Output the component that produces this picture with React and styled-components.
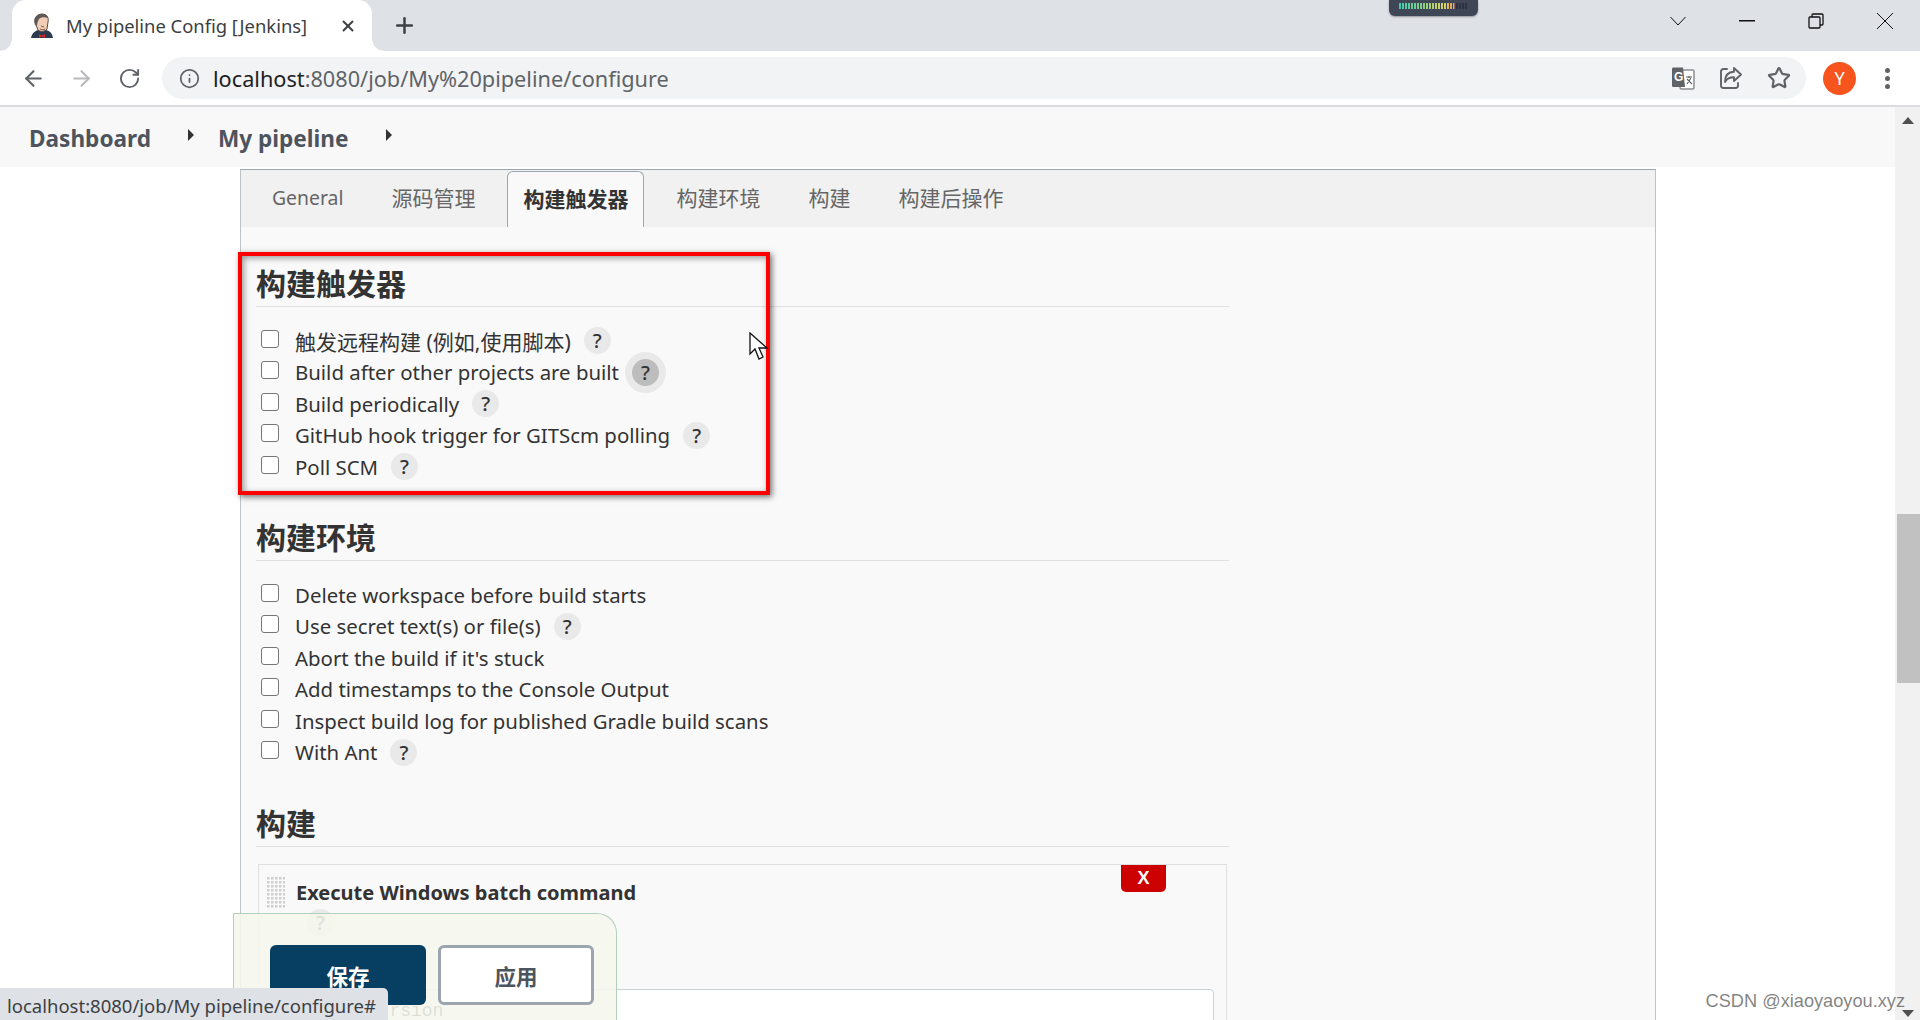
import React from 'react';
import styled, { createGlobalStyle } from 'styled-components';
import { ArrowLeft, ArrowRight, RotateCw, Info, Plus, X, Star } from 'lucide-react';

const Global = createGlobalStyle`
  html, body {
    margin: 0;
    padding: 0;
    background: #fff;
    overflow: hidden;
  }
  * {
    box-sizing: border-box;
  }
`;

const triggers = [
  { label: '触发远程构建 (例如,使用脚本)', help: true, cjk: true },
  { label: 'Build after other projects are built', help: true, hover: true },
  { label: 'Build periodically', help: true },
  { label: 'GitHub hook trigger for GITScm polling', help: true },
  { label: 'Poll SCM', help: true },
];

const environment = [
  { label: 'Delete workspace before build starts' },
  { label: 'Use secret text(s) or file(s)', help: true },
  { label: "Abort the build if it's stuck" },
  { label: 'Add timestamps to the Console Output' },
  { label: 'Inspect build log for published Gradle build scans' },
  { label: 'With Ant', help: true },
];

const tabs = ['General', '源码管理', '构建触发器', '构建环境', '构建', '构建后操作'];

function JenkinsIcon() {
  return (
    <svg width="24" height="26" viewBox="0 0 24 26">
      <path d="M1 25c1-5 4-7 7-8l8 0c4 1 6 3 7 8z" fill="#2c3a50" />
      <path d="M5 9c-1-5 3-8 7-8 5 0 7 4 6 8l-1 7c-2 3-7 3-9 1z" fill="#f0cdb4" stroke="#5c4a42" strokeWidth="1" />
      <path d="M5 12C3 6 6 1 12 1c3 0 6 1 6 4-3-1-7-1-9 1-1 2-2 4-2 7z" fill="#5e5a58" />
      <path d="M9 21l3 1.5 3-1.5 0 4-3-1.5-3 1.5z" fill="#d3262b" />
      <path d="M11 13l3 1M10 16c2 1 4 1 5 0" stroke="#7d5a48" strokeWidth="1" fill="none" />
    </svg>
  );
}

function TranslateIcon() {
  return (
    <svg width="24" height="24" viewBox="0 0 24 24">
      <rect x="9" y="4" width="14" height="19" rx="1.5" fill="#fff" stroke="#8a8d91" strokeWidth="1.5" />
      <path d="M1 3c0-1 .6-1.6 1.6-1.6H12l2 19.6H2.6C1.6 21 1 20.400 1 19.400z" fill="#5f6368" />
      <text x="3" y="15" fontSize="12" fontWeight="700" fill="#fff" fontFamily="Liberation Sans, sans-serif">G</text>
      <path d="M15 11h6M18 10v2M16 18l4-6M16 13l5 5" stroke="#5f6368" strokeWidth="1.2" fill="none" />
    </svg>
  );
}

function ShareIcon() {
  return (
    <svg width="24" height="24" viewBox="0 0 24 24" fill="none" stroke="#5f6368" strokeWidth="1.9" strokeLinejoin="round" strokeLinecap="round">
      <path d="M8 3H4.500A2.500 2.500 0 0 0 2 5.500v14A2.500 2.500 0 0 0 4.500 22h12a2.500 2.500 0 0 0 2.500-2.500V17" />
      <path d="M15 2l7 6.500L15 15v-3.700c-4 0-7 1-9 4.700 0-6 3-10 9-10.200z" />
    </svg>
  );
}

function CursorIcon() {
  return (
    <svg width="20" height="29" viewBox="0 0 20 29">
      <path d="M1 1v21l5-5 4 10 4-2-4-9h8z" fill="#fff" stroke="#111" strokeWidth="1.300" strokeLinejoin="miter" />
    </svg>
  );
}

function GripIcon() {
  const dots = [];
  for (let r = 0; r < 8; r++) {
    for (let c = 0; c < 5; c++) {
      dots.push(<rect key={`${r}-${c}`} x={c * 4} y={r * 4} width="2.500" height="2.500" fill="#cfcfcf" />);
    }
  }
  return (
    <svg width="18" height="32" viewBox="0 0 18 32">
      {dots}
    </svg>
  );
}

function OptionRow({ label, help, hover, cjk }) {
  return (
    <Row>
      <CheckBox />
      <Label $cjk={cjk}>{label}</Label>
      {help && <Help $hover={hover}>?</Help>}
    </Row>
  );
}

export default function App() {
  return (
    <Page>
      <Global />
      <TabStrip>
        <BrowserTab>
          <JenkinsIcon />
          <TabTitle>My pipeline Config [Jenkins]</TabTitle>
          <TabClose>
            <X size={18} strokeWidth={2.6} />
          </TabClose>
        </BrowserTab>
        <NewTab>
          <Plus size={25} strokeWidth={2.4} />
        </NewTab>
        <Meter>
          <MeterBars />
        </Meter>
        <WindowControls>
          <WinButton>
            <svg width="18" height="10" viewBox="0 0 18 10" fill="none" stroke="#111" strokeWidth="1">
              <path d="M1.500 1l7.500 8 7.500-8" />
            </svg>
          </WinButton>
          <WinButton>
            <svg width="16" height="2" viewBox="0 0 16 2">
              <rect width="16" height="1.500" fill="#111" />
            </svg>
          </WinButton>
          <WinButton>
            <svg width="16" height="16" viewBox="0 0 16 16" fill="none" stroke="#111" strokeWidth="1.300">
              <rect x="1" y="4" width="11" height="11" rx="1" />
              <path d="M4 4V2a1 1 0 0 1 1-1h9a1 1 0 0 1 1 1v9a1 1 0 0 1-1 1h-2" />
            </svg>
          </WinButton>
          <WinButton>
            <svg width="18" height="18" viewBox="0 0 18 18" stroke="#111" strokeWidth="1">
              <path d="M1 1l16 16M17 1L1 17" />
            </svg>
          </WinButton>
        </WindowControls>
      </TabStrip>

      <Toolbar>
        <NavIcon>
          <ArrowLeft size={25} strokeWidth={2} />
        </NavIcon>
        <NavIcon $off>
          <ArrowRight size={25} strokeWidth={2} />
        </NavIcon>
        <NavIcon>
          <RotateCw size={23} strokeWidth={2} />
        </NavIcon>
        <Omnibox>
          <Info size={21} strokeWidth={2} color="#5f6368" />
          <Url>
            localhost<span>:8080/job/My%20pipeline/configure</span>
          </Url>
          <OmniIcons>
            <TranslateIcon />
            <ShareIcon />
            <Star size={24} strokeWidth={2.2} color="#5f6368" />
          </OmniIcons>
        </Omnibox>
        <Avatar>Y</Avatar>
        <MenuDots>
          <i />
          <i />
          <i />
        </MenuDots>
      </Toolbar>

      <Viewport>
        <Main>
          <Breadcrumbs>
            <Crumb>Dashboard</Crumb>
            <Caret />
            <Crumb>My pipeline</Crumb>
            <Caret />
          </Breadcrumbs>
          <Content>
            <ConfigPanel>
              <ConfigTabs>
                {tabs.map((t, i) => (
                  <ConfigTab key={t} $active={i === 2} $latin={i === 0}>
                    {t}
                  </ConfigTab>
                ))}
              </ConfigTabs>
              <ConfigBody>
                <Section>
                  <Heading>构建触发器</Heading>
                  <Options>
                    {triggers.map((o) => (
                      <OptionRow key={o.label} {...o} />
                    ))}
                  </Options>
                  <RedBox />
                  <Cursor>
                    <CursorIcon />
                  </Cursor>
                </Section>
                <Section>
                  <Heading>构建环境</Heading>
                  <Options>
                    {environment.map((o) => (
                      <OptionRow key={o.label} {...o} />
                    ))}
                  </Options>
                </Section>
                <Section>
                  <Heading>构建</Heading>
                  <BuildStep>
                    <RemoveButton>X</RemoveButton>
                    <StepHead>
                      <GripIcon />
                      <StepTitle>Execute Windows batch command</StepTitle>
                    </StepHead>
                    <StepHelp>?</StepHelp>
                    <CommandBox>mvn --version</CommandBox>
                  </BuildStep>
                </Section>
              </ConfigBody>
            </ConfigPanel>
            <SaveBar>
              <SaveButton>保存</SaveButton>
              <ApplyButton>应用</ApplyButton>
            </SaveBar>
          </Content>
        </Main>
        <Scrollbar>
          <ScrollUp />
          <ScrollThumb />
          <ScrollDown />
        </Scrollbar>
      </Viewport>

      <StatusBubble>localhost:8080/job/My pipeline/configure#</StatusBubble>
      <Watermark>CSDN @xiaoyaoyou.xyz</Watermark>
    </Page>
  );
}

const UI_FONT = `"Noto Sans", "Noto Sans CJK SC", sans-serif`;

const Page = styled.div`
  position: relative;
  width: 1920px;
  height: 1020px;
  overflow: hidden;
  display: flex;
  flex-direction: column;
  font-family: ${UI_FONT};
  color: #333;
`;

const TabStrip = styled.div`
  height: 51px;
  flex: none;
  background: #dee1e6;
  display: flex;
  align-items: flex-end;
  padding-left: 12px;
  position: relative;
`;

const BrowserTab = styled.div`
  position: relative;
  width: 360px;
  height: 51px;
  background: #fff;
  border-radius: 14px 14px 0 0;
  display: flex;
  align-items: center;
  padding: 0 15px 0 18px;
  gap: 12px;

  &::before,
  &::after {
    content: '';
    position: absolute;
    bottom: 0;
    width: 12px;
    height: 12px;
    background: radial-gradient(circle at 0 0, #dee1e6 11.500px, #fff 12px);
  }
  &::before {
    left: -12px;
  }
  &::after {
    right: -12px;
    background: radial-gradient(circle at 100% 0, #dee1e6 11.500px, #fff 12px);
  }
`;

const TabTitle = styled.span`
  flex: 1;
  font-size: 18.400px;
  color: #3c4043;
  white-space: nowrap;
`;

const TabClose = styled.span`
  display: flex;
  color: #3c4043;
`;

const NewTab = styled.div`
  width: 34px;
  height: 51px;
  margin-left: 15px;
  display: flex;
  align-items: center;
  justify-content: center;
  color: #3c4043;
`;

const Meter = styled.div`
  position: absolute;
  top: 0;
  left: 1389px;
  width: 89px;
  height: 16px;
  background: #3f4655;
  border-radius: 0 0 6px 6px;
  box-shadow: 0 1px 2px rgba(0, 0, 0, 0.35);
  padding: 3px 10px;
`;

const MeterBars = styled.div`
  height: 6px;
  background:
    repeating-linear-gradient(90deg, transparent 0 2px, #3f4655 2px 3px),
    linear-gradient(90deg, #3cc9ae 0, #7ed08a 30%, #d8d060 65%, #e89a5e 80%, #2c3240 81%, #2c3240 100%);
`;

const WindowControls = styled.div`
  position: absolute;
  top: 0;
  right: 1px;
  height: 42px;
  display: flex;
`;

const WinButton = styled.div`
  width: 69px;
  display: flex;
  align-items: center;
  justify-content: center;
`;

const Toolbar = styled.div`
  height: 56px;
  flex: none;
  background: #fff;
  border-bottom: 2px solid #dadce0;
  display: flex;
  align-items: center;
  padding: 6px 0 6px 9px;
`;

const NavIcon = styled.div`
  width: 48px;
  display: flex;
  justify-content: center;
  color: ${(p) => (p.$off ? '#b8babd' : '#5f6368')};
`;

const Omnibox = styled.div`
  width: 1644px;
  height: 42px;
  margin-left: 9px;
  border-radius: 21px;
  background: #f1f3f4;
  display: flex;
  align-items: center;
  padding-left: 17px;
`;

const Url = styled.div`
  flex: 1;
  margin-left: 13px;
  font-size: 21.700px;
  color: #202124;
  white-space: nowrap;

  span {
    color: #5f6368;
  }
`;

const OmniIcons = styled.div`
  display: flex;
  align-items: center;
  gap: 24px;
  padding-right: 15px;
`;

const Avatar = styled.div`
  width: 33px;
  height: 33px;
  margin-left: 17px;
  border-radius: 50%;
  background: #f8541d;
  color: #fff;
  font-size: 18px;
  display: flex;
  align-items: center;
  justify-content: center;
`;

const MenuDots = styled.div`
  margin-left: 29px;
  display: flex;
  flex-direction: column;
  gap: 3px;

  i {
    width: 5px;
    height: 5px;
    border-radius: 50%;
    background: #5f6368;
  }
`;

const Viewport = styled.div`
  flex: 1;
  min-height: 0;
  display: flex;
`;

const Main = styled.div`
  flex: 1;
  min-width: 0;
  display: flex;
  flex-direction: column;
`;

const Breadcrumbs = styled.div`
  height: 60px;
  flex: none;
  background: #f8f8f8;
  display: flex;
  align-items: center;
  padding: 2px 0 0 29px;
`;

const Crumb = styled.a`
  font-size: 22.600px;
  font-weight: 700;
  color: #4d545d;
`;

const Caret = styled.span`
  width: 0;
  height: 0;
  margin: -6px 24px 0 37px;
  border-style: solid;
  border-width: 6px 0 6px 6px;
  border-color: transparent transparent transparent #333;
`;

const Content = styled.div`
  position: relative;
  flex: 1;
  min-height: 0;
  padding: 2px 0 0 240px;
  overflow: hidden;
`;

const ConfigPanel = styled.div`
  width: 1416px;
  height: 900px;
  background: #f9f9f9;
  border-left: 1px solid #bcc4c9;
  border-right: 1px solid #bcc4c9;
  border-top: 1px solid #9ba7af;
`;

const ConfigTabs = styled.div`
  height: 57px;
  background: #f1f1f1;
  display: flex;
  align-items: flex-end;
  gap: 16px;
  padding-left: 15px;
`;

const ConfigTab = styled.div`
  height: 56px;
  padding: 0 16px 4px;
  display: flex;
  align-items: center;
  font-size: ${(p) => (p.$latin ? '19.400px' : '21px')};
  color: ${(p) => (p.$active ? '#333' : '#666')};
  font-weight: ${(p) => (p.$active ? 700 : 400)};
  ${(p) =>
    p.$active &&
    `
    background: #f9f9f9;
    border: 1px solid #9ba7af;
    border-bottom: none;
    border-radius: 6px 6px 0 0;
    padding: 0 15px 4px;
  `}
`;

const ConfigBody = styled.div`
  padding: 19px 0 0 15px;
  display: flex;
  flex-direction: column;
  gap: 17.500px;
`;

const Section = styled.section`
  position: relative;
  width: 973px;
`;

const Heading = styled.h2`
  margin: 0;
  height: 61px;
  border-bottom: 1px solid #e0e0e0;
  font-size: 30px;
  font-weight: 700;
  line-height: 40px;
  padding-top: 18px;
  color: #333;
`;

const Options = styled.div`
  margin-top: 18px;
`;

const Row = styled.div`
  height: 31.500px;
  display: flex;
  align-items: center;
  padding-left: 5px;
`;

const CheckBox = styled.span`
  width: 18px;
  height: 18px;
  flex: none;
  margin-top: -4px;
  background: #fff;
  border: 1.500px solid #767676;
  border-radius: 3px;
`;

const Label = styled.span`
  margin-left: 16px;
  font-size: ${(p) => (p.$cjk ? '21px' : '20.400px')};
  color: #333;
  white-space: nowrap;
`;

const Help = styled.span`
  width: 27px;
  height: 27px;
  margin-left: 13px;
  flex: none;
  border-radius: 50%;
  background: ${(p) => (p.$hover ? '#bdbdbd' : '#e9e9e9')};
  box-shadow: ${(p) => (p.$hover ? '0 0 0 7px #e9e9e9' : 'none')};
  display: flex;
  align-items: center;
  justify-content: center;
  font-size: 20px;
  font-weight: 500;
  color: #333;
`;

const RedBox = styled.div`
  position: absolute;
  top: 6px;
  left: -18px;
  width: 532px;
  height: 243px;
  border: 4px solid #f00;
  box-shadow: 2px 2px 6px rgba(0, 0, 0, 0.55), inset 2px 2px 6px rgba(0, 0, 0, 0.4);
  pointer-events: none;
`;

const Cursor = styled.div`
  position: absolute;
  top: 86px;
  left: 493px;
  line-height: 0;
`;

const BuildStep = styled.div`
  position: relative;
  margin: 17px 0 0 2px;
  width: 969px;
  height: 400px;
  border: 1px solid #e0e0e0;
  padding: 12px 12px 0 8px;
`;

const RemoveButton = styled.div`
  position: absolute;
  top: 0;
  right: 60px;
  width: 45px;
  height: 27px;
  background: #c00;
  border-radius: 0 0 5px 5px;
  color: #fff;
  font-size: 18px;
  font-weight: 700;
  display: flex;
  align-items: center;
  justify-content: center;
  font-family: "Liberation Sans", sans-serif;
`;

const StepHead = styled.div`
  display: flex;
  align-items: center;
  gap: 11px;
`;

const StepTitle = styled.span`
  font-size: 20px;
  font-weight: 700;
  color: #333;
`;

const StepHelp = styled.div`
  width: 27px;
  height: 27px;
  margin: 0 0 0 40px;
  border-radius: 50%;
  background: #e9e9e9;
  display: flex;
  align-items: center;
  justify-content: center;
  font-size: 20px;
  font-weight: 500;
  color: #333;
`;

const CommandBox = styled.div`
  margin-top: 53px;
  margin-left: 4px;
  height: 200px;
  background: #fff;
  border: 1px solid #c9d1d7;
  border-radius: 4px;
  padding: 11px 0 0 31px;
  font-family: "Liberation Mono", monospace;
  font-size: 18px;
  color: #333;
`;

const SaveBar = styled.div`
  position: absolute;
  left: 233px;
  top: 746px;
  width: 384px;
  height: 120px;
  background: rgba(245, 247, 238, 0.88);
  border: 1px solid #b2d1bd;
  border-bottom: none;
  border-radius: 0 20px 0 0;
  padding: 31px 0 0 36px;
  display: flex;
  gap: 12px;
  align-items: flex-start;
`;

const SaveButton = styled.button`
  width: 156px;
  height: 60px;
  border: none;
  border-radius: 6px;
  background: #063f61;
  color: #fff;
  font-family: ${UI_FONT};
  font-size: 21.500px;
  font-weight: 700;
`;

const ApplyButton = styled.button`
  width: 156px;
  height: 60px;
  background: #fff;
  border: 3px solid #9aa5af;
  border-radius: 6px;
  color: #4d545d;
  font-family: ${UI_FONT};
  font-size: 21.500px;
  font-weight: 700;
`;

const Scrollbar = styled.div`
  width: 25px;
  flex: none;
  background: #f1f1f1;
  display: flex;
  flex-direction: column;
  align-items: center;
  position: relative;
`;

const ScrollUp = styled.span`
  margin-top: 10px;
  border-style: solid;
  border-width: 0 6px 7px 6px;
  border-color: transparent transparent #505050 transparent;
`;

const ScrollThumb = styled.div`
  width: 23px;
  align-self: flex-end;
  height: 169px;
  margin-top: 390px;
  background: #c1c1c1;
`;

const ScrollDown = styled.span`
  margin-top: auto;
  margin-bottom: 3px;
  border-style: solid;
  border-width: 7px 6px 0 6px;
  border-color: #505050 transparent transparent transparent;
`;

const StatusBubble = styled.div`
  position: absolute;
  left: 0;
  bottom: 0;
  width: 388px;
  height: 32px;
  background: #dee1e6;
  border-radius: 0 5px 0 0;
  padding-left: 7px;
  font-size: 18.500px;
  line-height: 35px;
  color: #3c4043;
  white-space: nowrap;
  overflow: hidden;
`;

const Watermark = styled.div`
  position: absolute;
  right: 15px;
  bottom: 8px;
  font-family: "Liberation Sans", sans-serif;
  font-size: 18.200px;
  color: rgba(90, 90, 90, 0.75);
`;
